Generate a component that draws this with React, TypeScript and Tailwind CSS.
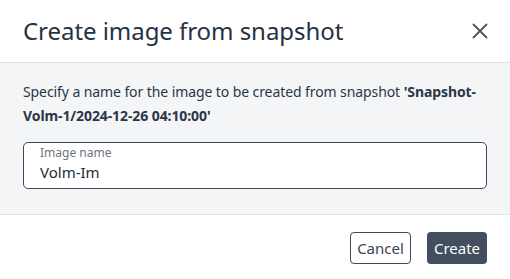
import React from 'react';

const App = () => {
    return (
        <div className="w-[510px] h-[279px] bg-white flex flex-col text-[#232f3e]" style={{ fontFamily: '"Noto Sans", sans-serif' }}>
            <div className="h-[63px] flex items-center justify-between pl-[23px] pr-[22px] border-b border-[#dce3ee]">
                <h2 className="text-[24px] leading-none text-[#263242] tracking-[-0.05px] pb-[1px]">Create image from snapshot</h2>
                <button className="w-4 h-4 flex items-center justify-center text-[#4a5563]">
                    <svg width="16" height="16" viewBox="0 0 16 16" fill="none" stroke="currentColor" strokeWidth="1.8" strokeLinecap="round">
                        <path d="M1.5 1.5l13 13M14.5 1.5l-13 13" />
                    </svg>
                </button>
            </div>
            <div className="h-[152px] bg-[#f4f5f7] border-b border-[#dce3ee] px-[23px] pt-[17px]">
                <p className="text-[14px] leading-[24px] tracking-[-0.09px] text-[#2b3646]">
                    Specify a name for the image to be created from snapshot <b className="font-bold">'Snapshot-Volm-1/2024-12-26 04:10:00'</b>
                </p>
                <div className="mt-[14px] h-[47px] bg-white border border-[#3d4858] rounded-[5px] pl-[16px] pt-[2px]">
                    <div className="text-[12px] leading-[16px] text-[#6b7480]">Image name</div>
                    <div className="text-[15px] leading-[20px] mt-[1px] text-[#222d3b]">Volm-Im</div>
                </div>
            </div>
            <div className="flex-1 flex items-start justify-end gap-4 pr-[23px] pt-[17px]">
                <button className="h-[32px] w-[61px] border border-[#3d4858] rounded-[4px] bg-white text-[15px] text-[#3a4555]">Cancel</button>
                <button className="h-[32px] w-[60px] rounded-[4px] bg-[#434f5e] text-[15px] text-white">Create</button>
            </div>
        </div>
    );
};

export default App;
